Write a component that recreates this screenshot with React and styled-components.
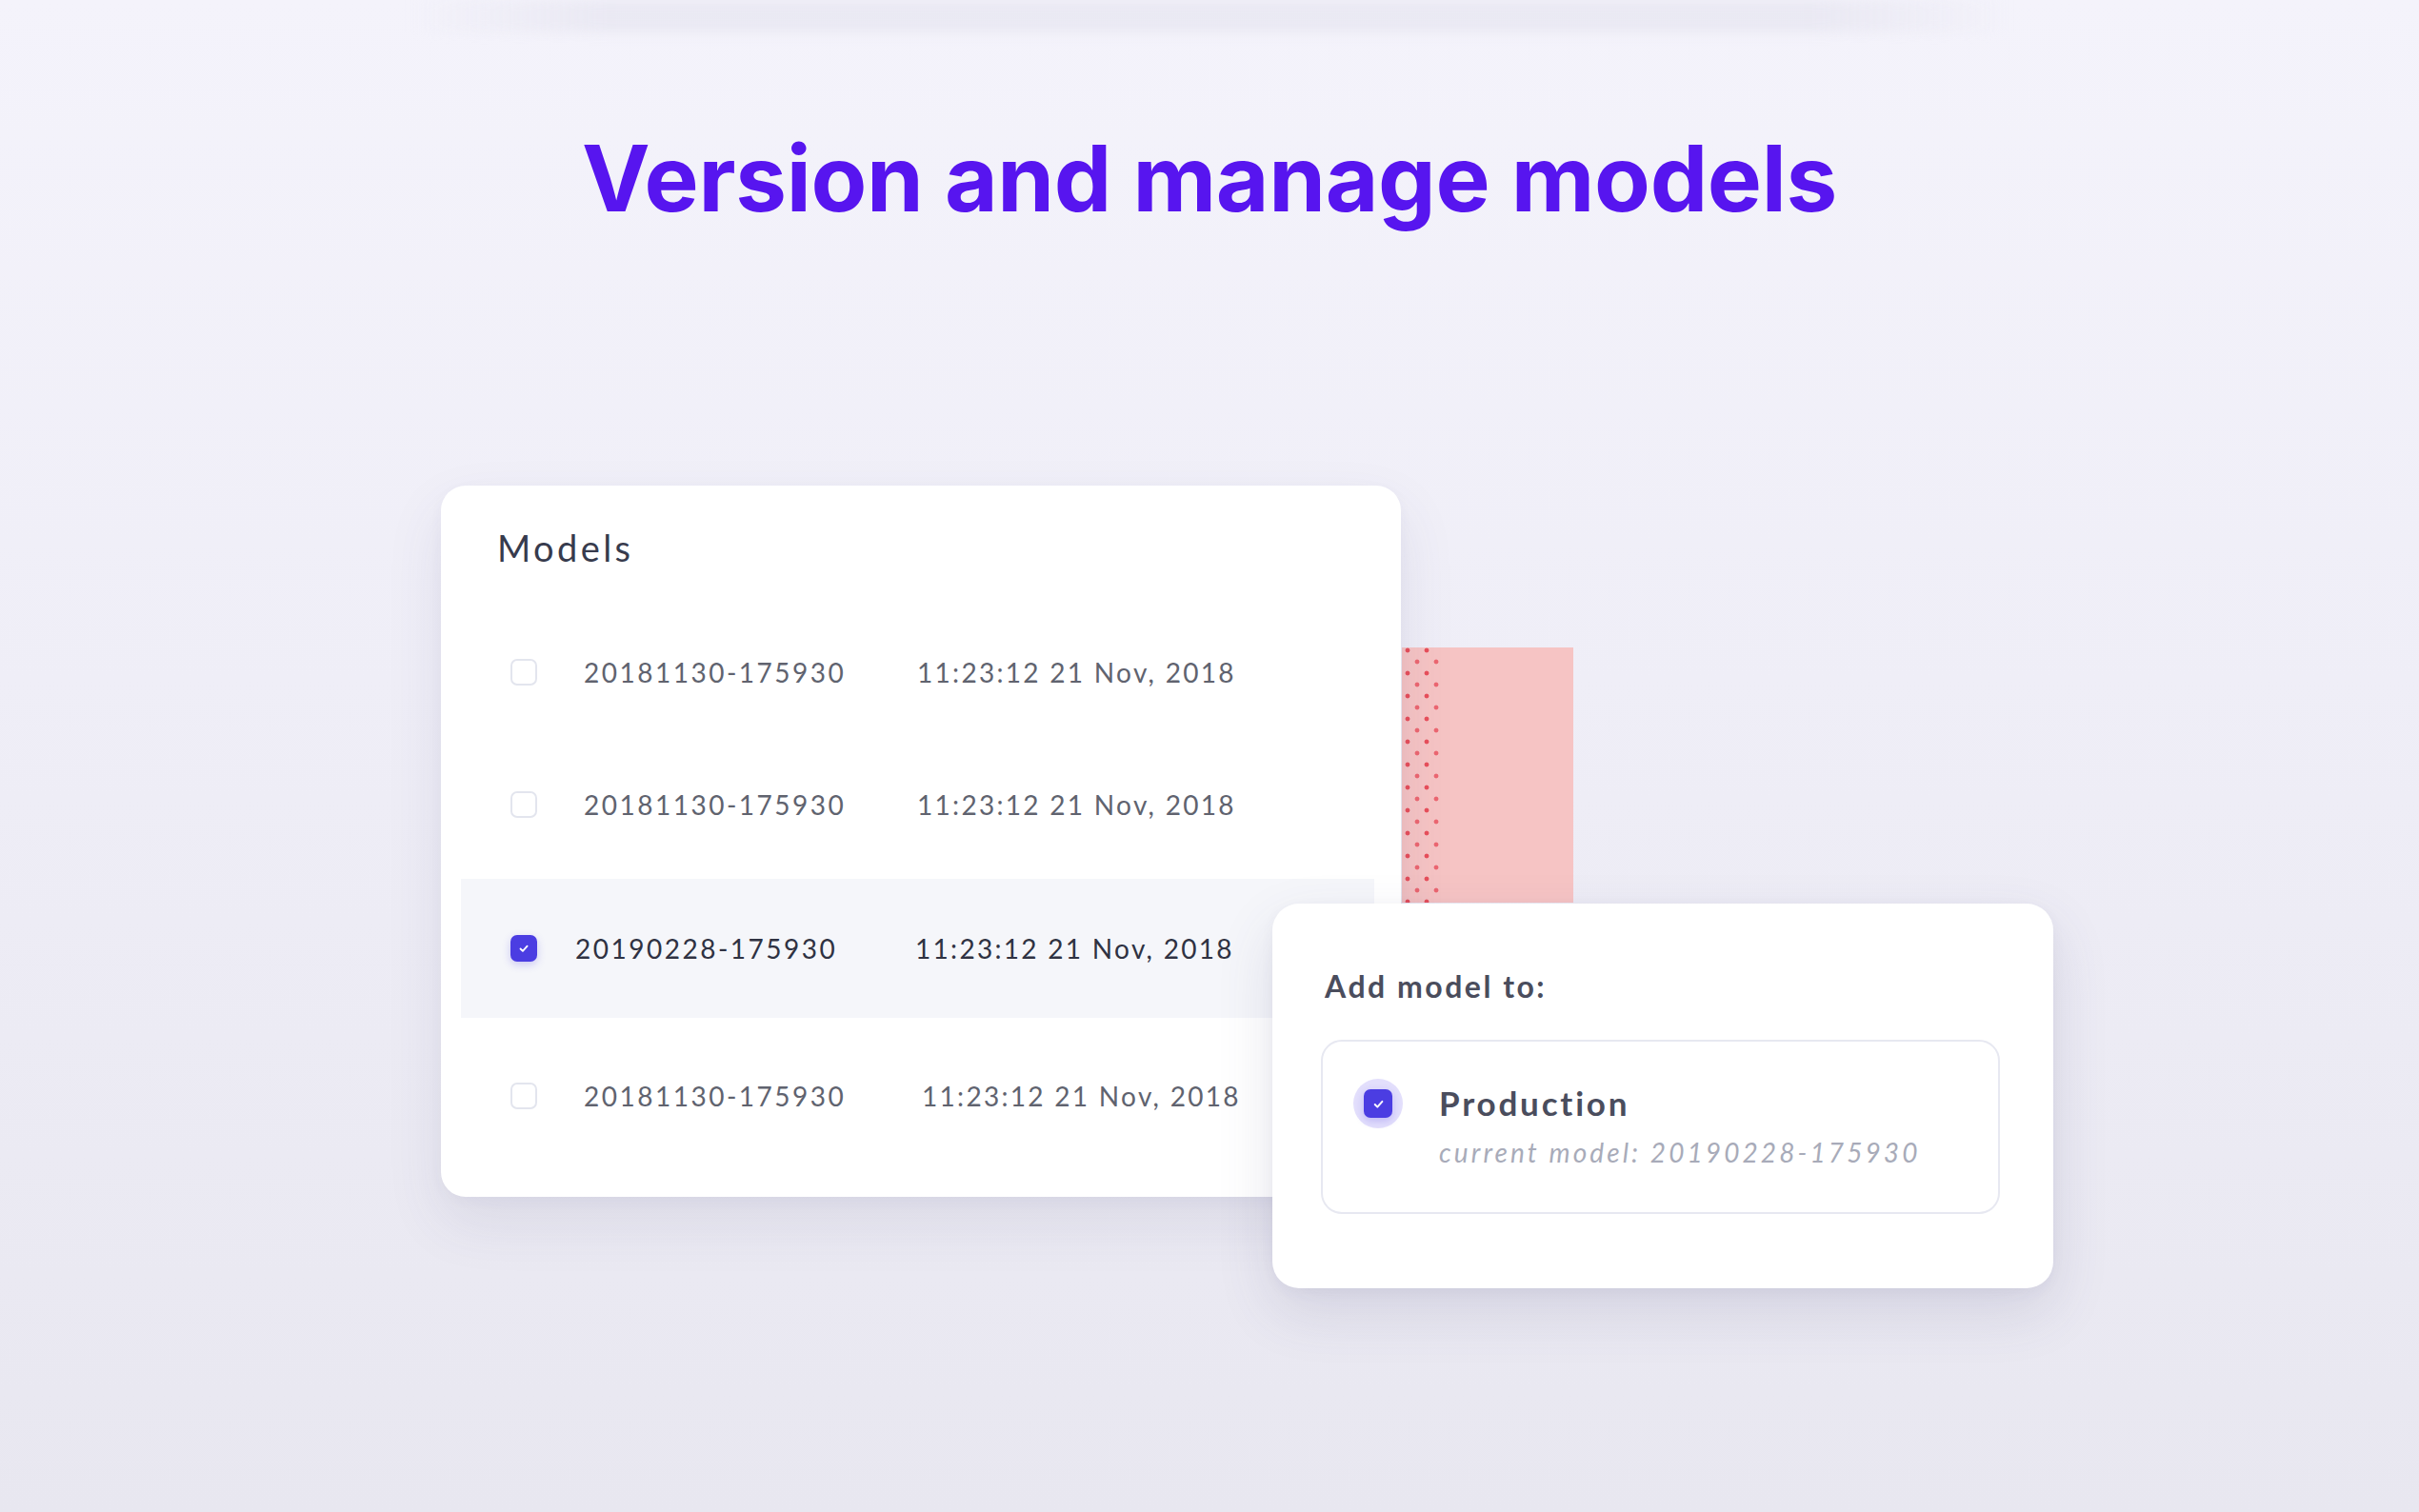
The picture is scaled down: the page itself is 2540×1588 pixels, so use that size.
import styled, { createGlobalStyle } from 'styled-components';

const GlobalStyle = createGlobalStyle`
  html, body {
    margin: 0;
    padding: 0;
  }
  body {
    min-height: 100vh;
    background: linear-gradient(180deg, #f4f3fb 0%, #efeef7 45%, #e8e7f0 100%);
    font-family: Lato, "Open Sans", sans-serif;
  }
`;

const Page = styled.div`
  width: 2540px;
  height: 1588px;
  display: flex;
  flex-direction: column;
  overflow: hidden;
`;

const TopBand = styled.div`
  height: 34px;
  margin: 0 430px;
  background: linear-gradient(90deg, rgba(230, 229, 240, 0) 0%, rgba(230, 229, 240, 0.7) 12%, rgba(230, 229, 240, 0.7) 88%, rgba(230, 229, 240, 0) 100%);
  filter: blur(6px);
`;

const Title = styled.h1`
  margin: 103px 0 0;
  font-family: Inter, "Liberation Sans", sans-serif;
  font-weight: 700;
  font-size: 96px;
  line-height: 100px;
  letter-spacing: -0.3px;
  text-align: center;
  color: #5715ef;
`;

const Stage = styled.div`
  position: relative;
  width: 1693px;
  margin: 273px 0 0 463px;
`;

const ModelsCard = styled.div`
  position: relative;
  z-index: 2;
  width: 1008px;
  padding-bottom: 37px;
  background: #ffffff;
  border-radius: 26px;
  box-shadow: 0 26px 60px rgba(70, 70, 120, 0.1), 0 4px 14px rgba(70, 70, 120, 0.04);
`;

const CardHeader = styled.div`
  height: 126px;
  display: flex;
  align-items: center;
  padding: 4px 0 0 59px;
  box-sizing: border-box;
  font-size: 38px;
  letter-spacing: 3.4px;
  color: #373b4d;
`;

const Row = styled.div`
  height: ${(p) => (p.$selected ? '146px' : '139px')};
  margin: ${(p) => (p.$selected ? '9px 28px 12px 21px' : '0 28px 0 21px')};
  display: flex;
  align-items: center;
  padding-left: 52px;
  background: ${(p) => (p.$selected ? '#f5f6fa' : 'transparent')};
  font-size: 28px;
  letter-spacing: 2.3px;
  color: ${(p) => (p.$selected ? '#2f3242' : '#60636f')};
`;

const Box = styled.span`
  flex: none;
  width: ${(p) => p.$size || 28}px;
  height: ${(p) => p.$size || 28}px;
  box-sizing: border-box;
  border-radius: 7px;
  display: flex;
  align-items: center;
  justify-content: center;
  border: ${(p) => (p.$checked ? 'none' : '2px solid #e3e5ee')};
  background: ${(p) => (p.$checked ? '#4b3de2' : '#ffffff')};
  box-shadow: ${(p) => (p.$checked ? '0 3px 8px rgba(75, 61, 226, 0.25)' : 'none')};
`;

const IdCell = styled.span`
  width: ${(p) => p.$w || 350}px;
  margin-left: ${(p) => p.$gap || 49}px;
  letter-spacing: 2.5px;
`;

const DateCell = styled.span``;

const Pink = styled.div`
  position: absolute;
  z-index: 1;
  left: 1009px;
  top: 170px;
  width: 180px;
  height: 268px;
  background: #f6c4c4;
  display: flex;
`;

const Dots = styled.div`
  width: 42px;
  height: 100%;
  background-image:
    radial-gradient(circle, #e84f5a 2px, rgba(232, 79, 90, 0) 2.8px),
    radial-gradient(circle, #ec6670 2px, rgba(236, 102, 112, 0) 2.8px);
  background-size: 20px 24px, 20px 24px;
  background-position: -4px 15px, 6px 3px;
`;

const AddCard = styled.div`
  position: absolute;
  z-index: 3;
  left: 873px;
  top: 439px;
  width: 820px;
  height: 404px;
  box-sizing: border-box;
  padding: 0 56px 0 51px;
  background: #ffffff;
  border-radius: 28px;
  box-shadow: 0 24px 60px rgba(70, 70, 120, 0.14), 0 4px 14px rgba(70, 70, 120, 0.05);
  display: flex;
  flex-direction: column;
`;

const AddTitle = styled.div`
  height: 143px;
  display: flex;
  align-items: center;
  padding: 29px 0 0 4px;
  box-sizing: border-box;
  font-size: 32px;
  font-weight: 700;
  letter-spacing: 2.5px;
  color: #4a4d5d;
`;

const Target = styled.div`
  height: 183px;
  box-sizing: border-box;
  border: 2px solid #e7e8f1;
  border-radius: 22px;
  display: flex;
  align-items: flex-start;
  padding: 39px 0 0 32px;
`;

const Halo = styled.span`
  flex: none;
  width: 52px;
  height: 52px;
  border-radius: 50%;
  background: #e3dffc;
  display: flex;
  align-items: center;
  justify-content: center;
`;

const TargetText = styled.div`
  margin-left: 38px;
  display: flex;
  flex-direction: column;
`;

const TargetName = styled.div`
  font-size: 35px;
  font-weight: 700;
  letter-spacing: 2.8px;
  line-height: 50px;
  color: #4a4d5d;
`;

const TargetSub = styled.div`
  margin-top: 10px;
  font-size: 28px;
  font-style: italic;
  letter-spacing: 3.1px;
  color: #a8abb9;
`;

const Check = ({ size = 12 }) => (
  <svg width={size} height={size} viewBox="0 0 12 12" fill="none">
    <path d="M2.5 6.5l2.4 2.4L9.6 3.6" stroke="#ffffff" strokeWidth="1.8" strokeLinecap="round" strokeLinejoin="round" />
  </svg>
);

const rows = [
  { id: '20181130-175930', date: '11:23:12 21 Nov, 2018' },
  { id: '20181130-175930', date: '11:23:12 21 Nov, 2018' },
  { id: '20190228-175930', date: '11:23:12 21 Nov, 2018', selected: true },
  { id: '20181130-175930', date: '11:23:12 21 Nov, 2018', w: 355 },
];

const App = () => {
  return (
    <Page>
      <GlobalStyle />
      <TopBand />
      <Title>Version and manage models</Title>

      <Stage>
        <ModelsCard>
          <CardHeader>Models</CardHeader>
          {rows.map((r, i) => (
            <Row key={i} $selected={r.selected}>
              <Box $checked={r.selected}>{r.selected && <Check />}</Box>
              <IdCell $w={r.selected ? 357 : r.w} $gap={r.selected ? 40 : 49}>{r.id}</IdCell>
              <DateCell>{r.date}</DateCell>
            </Row>
          ))}
        </ModelsCard>

        <Pink>
          <Dots />
        </Pink>

        <AddCard>
          <AddTitle>Add model to:</AddTitle>
          <Target>
            <Halo>
              <Box $checked $size={30}>
                <Check size={13} />
              </Box>
            </Halo>
            <TargetText>
              <TargetName>Production</TargetName>
              <TargetSub>current model: 20190228-175930</TargetSub>
            </TargetText>
          </Target>
        </AddCard>
      </Stage>
    </Page>
  );
};

export default App;
